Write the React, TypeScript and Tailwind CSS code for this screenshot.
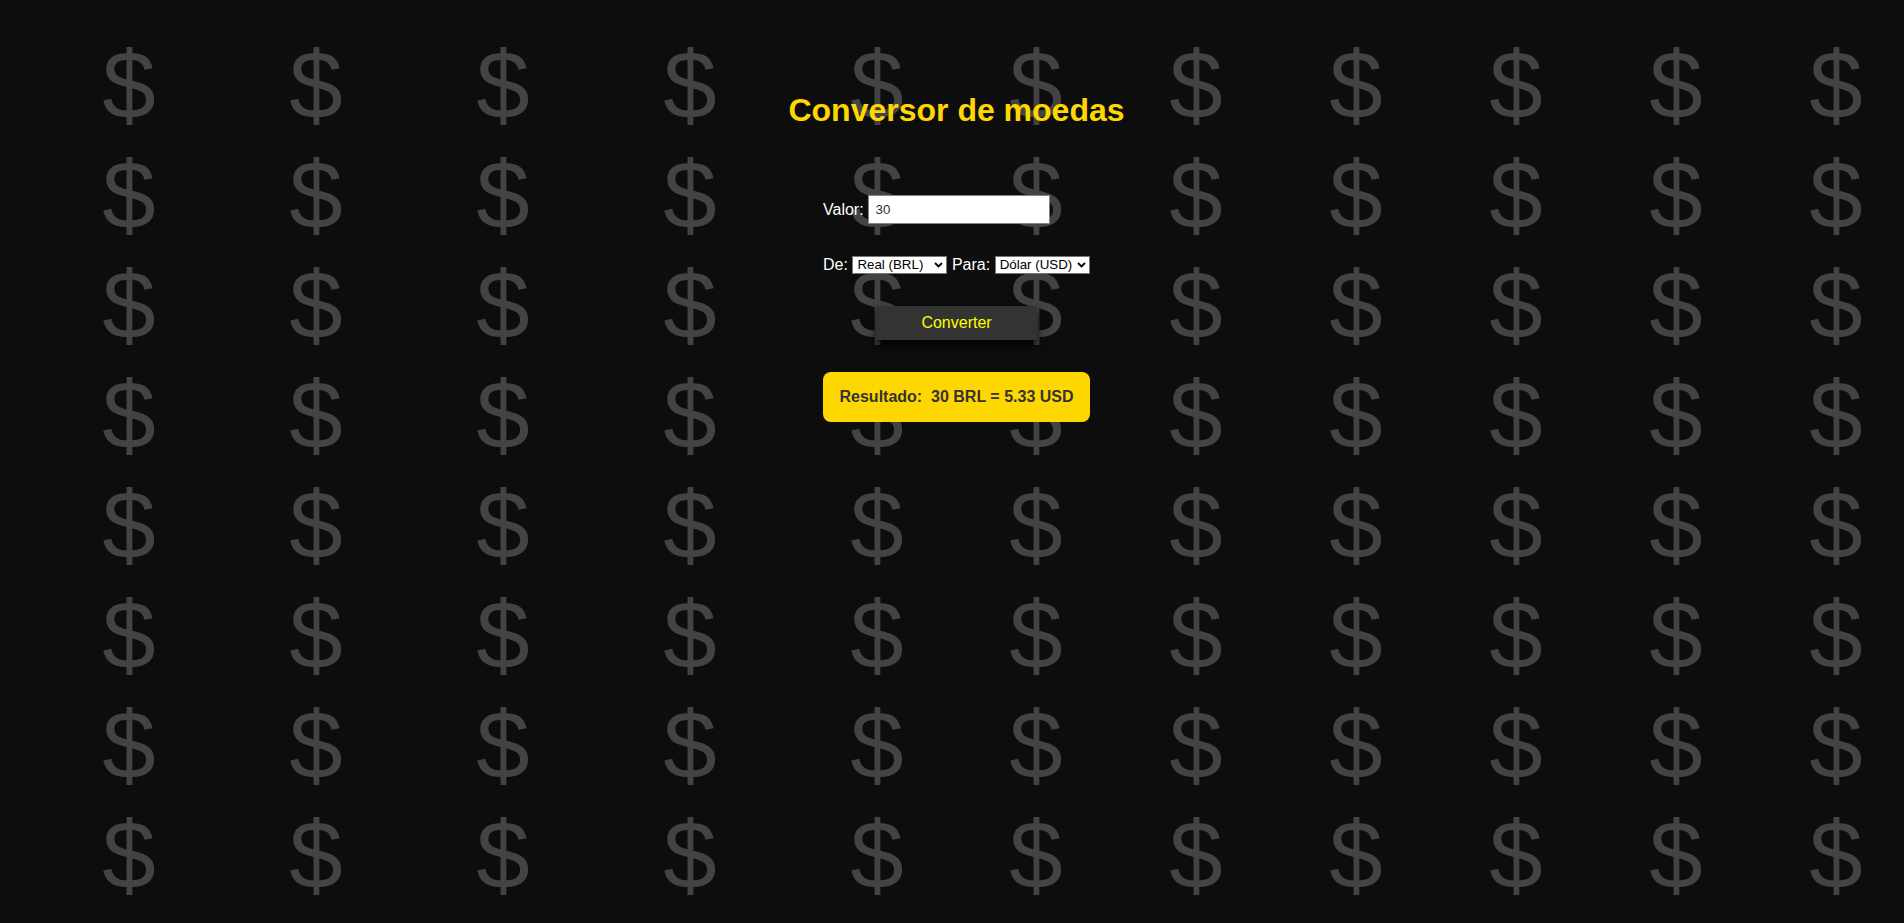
import { useState } from 'react';

const RATES: Record<string, number> = {
  BRL: 1,
  USD: 0.1777,
  EUR: 0.164,
};

const CURRENCIES = [
  { code: 'BRL', label: 'Real (BRL)' },
  { code: 'USD', label: 'Dólar (USD)' },
  { code: 'EUR', label: 'Euro (EUR)' },
];

const ROWS = Array.from({ length: 8 }, (_, i) => i);

// one vertical strip of dollar signs in the backdrop
function DollarColumn() {
  return (
    <div className="flex w-[60px] flex-col items-center">
      {ROWS.map((r) => (
        <span key={r} className="text-[96px] leading-[110px] text-[#434343]">
          $
        </span>
      ))}
    </div>
  );
}

function Chevron() {
  return (
    <svg
      className="pointer-events-none absolute right-[4px] top-1/2 h-[6px] w-[9px] -translate-y-1/2"
      viewBox="0 0 9 6"
      fill="none"
    >
      <path d="M1 1l3.5 3.5L8 1" stroke="#000" strokeWidth="1.8" />
    </svg>
  );
}

function CurrencySelect({ value, onChange }: { value: string; onChange: (v: string) => void }) {
  return (
    <div className="relative inline-flex">
      <select
        value={value}
        onChange={(e) => onChange(e.target.value)}
        className="h-[18px] w-[95px] appearance-none border border-[#767676] bg-white pl-[4px] pr-[14px] text-[13.33px] leading-[16px] text-black outline-none"
      >
        {CURRENCIES.map((c) => (
          <option key={c.code} value={c.code}>
            {c.label}
          </option>
        ))}
      </select>
      <Chevron />
    </div>
  );
}

export default function App() {
  const [amount, setAmount] = useState('30');
  const [from, setFrom] = useState('BRL');
  const [to, setTo] = useState('USD');
  const [result, setResult] = useState('30 BRL = 5.33 USD');

  const convert = () => {
    const n = parseFloat(amount.replace(',', '.')) || 0;
    const out = (n / RATES[from]) * RATES[to];
    setResult(`${n} ${from} = ${out.toFixed(2)} ${to}`);
  };

  return (
    <div className="grid min-h-screen overflow-hidden bg-[#0d0d0d] font-['Liberation_Sans',Arial,sans-serif]">
      {/* Background pattern */}
      <div className="flex gap-[99px] pl-[99px] pt-[30px] [grid-area:1/1]" aria-hidden>
        <div className="flex gap-[127px]">
          {[0, 1, 2, 3, 4].map((c) => (
            <DollarColumn key={c} />
          ))}
        </div>
        <div className="flex gap-[100px]">
          {[0, 1, 2, 3, 4, 5].map((c) => (
            <DollarColumn key={c} />
          ))}
        </div>
      </div>

      {/* Converter */}
      <div className="relative flex flex-col items-center pl-[9px] pt-[92px] [grid-area:1/1]">
        <h1 className="text-[32px] font-bold leading-[37px] text-[#ffd700]">Conversor de moedas</h1>

        <div className="mt-[66px] flex w-[267px] flex-col">
          <div className="flex items-center gap-[4px] text-[16px] leading-[18px] text-white">
            <label htmlFor="valor">Valor:</label>
            <input
              id="valor"
              type="text"
              inputMode="decimal"
              value={amount}
              onChange={(e) => setAmount(e.target.value)}
              className="h-[29px] w-[182px] border border-[#858585] bg-white pl-[7px] text-[13.33px] text-[#333333] outline-none"
            />
          </div>

          <div className="mt-[32px] flex items-center gap-[4.5px] text-[16px] leading-[18px] text-white">
            <span>De:</span>
            <CurrencySelect value={from} onChange={setFrom} />
            <span>Para:</span>
            <CurrencySelect value={to} onChange={setTo} />
          </div>

          <button
            onClick={convert}
            className="mt-[32px] h-[34px] w-[161px] self-center bg-[#333333] text-[16px] text-[#ffff00] shadow-[0_5px_8px_rgba(0,0,0,0.85)]"
          >
            Converter
          </button>

          <div className="mt-[32px] h-[50px] w-full rounded-lg bg-[#ffd700] text-center text-[16px] font-bold leading-[50px] whitespace-pre text-[#333333]">
            {`Resultado:  ${result}`}
          </div>
        </div>
      </div>
    </div>
  );
}
